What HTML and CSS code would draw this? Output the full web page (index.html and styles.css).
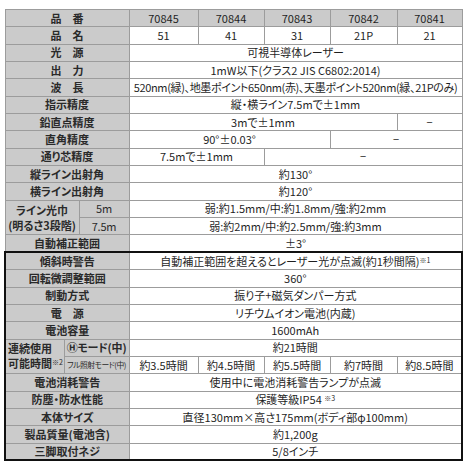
FILE: index.html
```html
<!DOCTYPE html>
<html lang="ja">
<head>
<meta charset="utf-8">
<title>仕様</title>
<link rel="stylesheet" href="styles.css">
</head>
<body>
<table class="spec">
  <colgroup>
    <col class="c-lab1"><col class="c-lab2"><col class="c-lab3">
    <col class="c-p1"><col class="c-p2"><col class="c-p3"><col class="c-p4"><col class="c-p5">
  </colgroup>
  <tbody class="top">
    <tr class="head"><th colspan="3">品　番</th><td>70845</td><td>70844</td><td>70843</td><td>70842</td><td>70841</td></tr>
    <tr><th colspan="3">品　名</th><td>51</td><td>41</td><td>31</td><td>21P</td><td>21</td></tr>
    <tr><th colspan="3">光　源</th><td colspan="5">可視半導体レーザー</td></tr>
    <tr><th colspan="3">出　力</th><td colspan="5">1mW以下(クラス2 JIS C6802:2014)</td></tr>
    <tr><th colspan="3">波　長</th><td colspan="5" class="tight">520nm(緑)、地墨ポイント650nm(赤)、天墨ポイント520nm(緑、21Pのみ)</td></tr>
    <tr><th colspan="3">指示精度</th><td colspan="5">縦・横ライン7.5mで±1mm</td></tr>
    <tr><th colspan="3">鉛直点精度</th><td colspan="4">3mで±1mm</td><td>−</td></tr>
    <tr><th colspan="3">直角精度</th><td colspan="3">90°±0.03°</td><td colspan="2">−</td></tr>
    <tr><th colspan="3">通り芯精度</th><td colspan="2">7.5mで±1mm</td><td colspan="3">−</td></tr>
    <tr><th colspan="3">縦ライン出射角</th><td colspan="5">約130°</td></tr>
    <tr><th colspan="3">横ライン出射角</th><td colspan="5">約120°</td></tr>
    <tr><th rowspan="2" colspan="2" class="group">ライン光巾<br>(明るさ3段階)</th><th class="sub plain">5m</th><td colspan="5">弱:約1.5mm/中:約1.8mm/強:約2mm</td></tr>
    <tr><th class="sub plain">7.5m</th><td colspan="5">弱:約2mm/中:約2.5mm/強:約3mm</td></tr>
    <tr><th colspan="3">自動補正範囲</th><td colspan="5">±3°</td></tr>
  </tbody>
  <tbody class="bottom">
    <tr><th colspan="3">傾斜時警告</th><td colspan="5">自動補正範囲を超えるとレーザー光が点滅(約1秒間隔)<sup>※1</sup></td></tr>
    <tr><th colspan="3">回転微調整範囲</th><td colspan="5">360°</td></tr>
    <tr><th colspan="3">制動方式</th><td colspan="5">振り子+磁気ダンパー方式</td></tr>
    <tr><th colspan="3">電　源</th><td colspan="5">リチウムイオン電池(内蔵)</td></tr>
    <tr><th colspan="3">電池容量</th><td colspan="5">1600mAh</td></tr>
    <tr><th rowspan="2" class="group left">連続使用<br>可能時間<sup>※2</sup></th><th colspan="2" class="sub">Ⓗモード(中)</th><td colspan="5">約21時間</td></tr>
    <tr><th colspan="2" class="sub small">フル照射モード(中)</th><td>約3.5時間</td><td>約4.5時間</td><td>約5.5時間</td><td>約7時間</td><td>約8.5時間</td></tr>
    <tr><th colspan="3">電池消耗警告</th><td colspan="5">使用中に電池消耗警告ランプが点滅</td></tr>
    <tr><th colspan="3">防塵・防水性能</th><td colspan="5">保護等級IP54 <sup>※3</sup></td></tr>
    <tr><th colspan="3">本体サイズ</th><td colspan="5">直径130mm×高さ175mm(ボディ部φ100mm)</td></tr>
    <tr><th colspan="3">製品質量(電池含)</th><td colspan="5">約1,200g</td></tr>
    <tr><th colspan="3">三脚取付ネジ</th><td colspan="5">5/8インチ</td></tr>
  </tbody>
</table>
</body>
</html>
```
FILE: styles.css
```css
html, body {
  background: #ffffff;
}
body {
  margin: 9px 0 0 4px;
  font-family: "Noto Sans CJK JP", "Noto Sans", sans-serif;
}
.spec {
  border-collapse: collapse;
  table-layout: fixed;
  width: 457px;
  font-size: 11px;
  line-height: 1;
  color: #1f1f1f;
  font-feature-settings: "palt";
  border: 1px solid #555555;
}
.c-lab1 { width: 59px; }
.c-lab2 { width: 15px; }
.c-lab3 { width: 50px; }
.c-p1 { width: 69px; }
.c-p2 { width: 66px; }
.c-p3 { width: 66px; }
.c-p4 { width: 67px; }
.c-p5 { width: 65px; }
.spec tr {
  height: 17.35px;
}
.spec th,
.spec td {
  border: 1px solid #9c9c9c;
  padding: 0;
  text-align: center;
  vertical-align: middle;
  white-space: nowrap;
  overflow: hidden;
}
.spec th {
  background: #cbcbcb;
  font-weight: 700;
  color: #2a2a2a;
}
.spec .head td {
  background: #cbcbcb;
}
.spec .bottom {
  border: 2px solid #111111;
}
.spec .group {
  line-height: 15px;
}
.spec .group.left {
  text-align: left;
  padding-left: 2px;
}
.spec .plain {
  font-weight: 400;
}
.spec .sub {
  letter-spacing: -0.2px;
}
.spec .small {
  font-size: 7.8px;
  letter-spacing: -0.5px;
  font-weight: 400;
}
.spec .tight {
  letter-spacing: -0.35px;
}
.spec sup {
  font-size: 7px;
  line-height: 0;
  vertical-align: 3px;
  font-weight: 400;
}
```
